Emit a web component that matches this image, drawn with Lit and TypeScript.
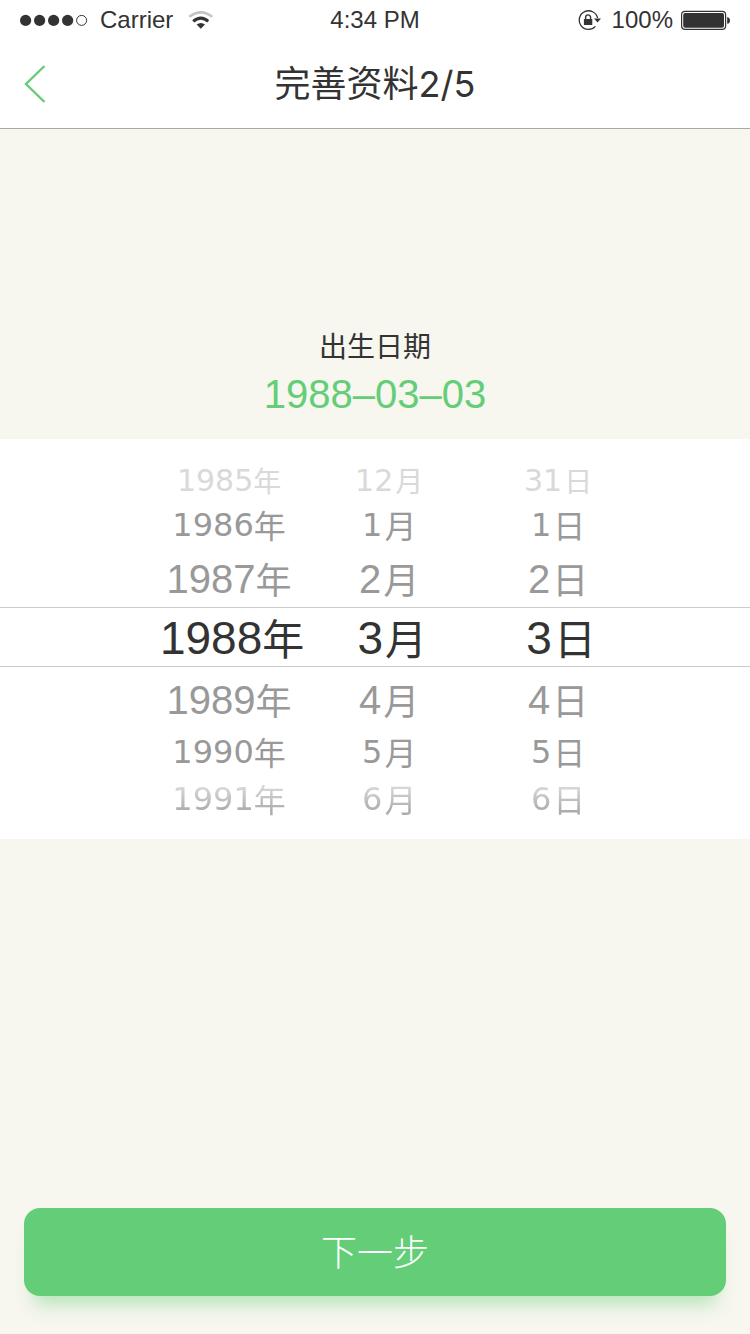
import { LitElement, html, css, svg } from "lit";
import { customElement, state } from "lit/decorators.js";
import { classMap } from "lit/directives/class-map.js";

interface Wheel {
  key: string;
  label: string;
  unit: string;
  items: number[];
}

const wheels: Wheel[] = [
  { key: "year", label: "年份", unit: "年", items: [1985, 1986, 1987, 1988, 1989, 1990, 1991] },
  { key: "month", label: "月份", unit: "月", items: [12, 1, 2, 3, 4, 5, 6] },
  { key: "day", label: "日期", unit: "日", items: [31, 1, 2, 3, 4, 5, 6] },
];

@customElement("status-bar")
class StatusBar extends LitElement {
  static styles = css`
    :host {
      display: grid;
      grid-template-columns: 1fr auto 1fr;
      align-items: center;
      height: 40px;
      padding: 0 20px;
      font: 24px/40px "Liberation Sans", sans-serif;
      color: #333;
    }
    .side {
      display: flex;
      align-items: center;
    }
    .end {
      justify-content: flex-end;
    }
    .dots {
      margin-right: 12px;
    }
    .wifi {
      margin-left: 14px;
    }
    .lock {
      margin-right: 10px;
    }
    .battery {
      margin-left: 8px;
    }
    svg {
      display: block;
    }
  `;

  render() {
    return html`
      <div class="side">
        <svg class="dots" width="68" height="12" viewBox="0 0 68 12" aria-hidden="true">
          ${[5.6, 19.6, 33.6, 47.6].map((x) => svg`<circle cx=${x} cy="6.4" r="5.6" fill="#333" />`)}
          <circle cx="61.6" cy="6.4" r="5" fill="none" stroke="#333" />
        </svg>
        <span>Carrier</span>
        <svg class="wifi" width="28" height="20" viewBox="0 0 28 20" fill="none" aria-hidden="true">
          <path d="M2.2 6.8Q14 -2 25.2 6.8" stroke="#c4c4c4" stroke-width="2.6" />
          <path d="M6.2 11.4Q14 4.8 21.2 11.4" stroke="#333" stroke-width="3" />
          <path d="M9.6 14.6Q14 11.4 18 14.6L13.8 18.8Z" fill="#333" />
        </svg>
      </div>
      <span>4:34 PM</span>
      <div class="side end">
        <svg class="lock" width="24" height="22" viewBox="0 0 24 22" fill="none" aria-hidden="true">
          <path d="M17.4 17.4A9.3 9.3 0 1 1 19.6 9" stroke="#333" stroke-width="1.3" />
          <path d="M16 9.4H23L19.5 13.4Z" fill="#333" />
          <rect x="5.9" y="10" width="8.4" height="6" rx="0.6" fill="#333" />
          <path d="M7.6 10.4V8.4a2.5 2.5 0 0 1 5 0V10.4" stroke="#333" stroke-width="1.4" />
        </svg>
        <span>100%</span>
        <svg class="battery" width="49" height="20" viewBox="0 0 49 20" aria-hidden="true">
          <rect x="0.6" y="1.4" width="44" height="18" rx="3.4" fill="none" stroke="#333" stroke-width="1.2" />
          <rect x="2.2" y="3" width="40.8" height="14.8" rx="2" fill="#333" />
          <path d="M46.2 7Q49 7.6 49 10.4T46.2 13.8Z" fill="#333" />
        </svg>
      </div>
    `;
  }
}

@customElement("date-wheels")
class DateWheels extends LitElement {
  static styles = css`
    :host {
      display: block;
      background: #fff;
    }
    .grid {
      display: grid;
      grid-template-columns: 154fr 150fr 170fr 168fr 108fr;
      grid-template-rows: 36px 52px 56px 60px 66px 38px 56px;
      padding: 24px 0 12px;
    }
    .band {
      grid-row: 4;
      grid-column: 1 / -1;
      border-top: 1px solid #ccc;
      border-bottom: 1px solid #ccc;
    }
    .wheel {
      display: contents;
    }
    .year {
      grid-column: 2;
    }
    .month {
      grid-column: 3;
    }
    .day {
      grid-column: 4;
    }
    .item {
      display: flex;
      align-items: center;
      justify-content: center;
      line-height: 1;
      color: #999;
      cursor: pointer;
    }
    .item input {
      appearance: none;
      display: block;
      flex: none;
      width: 0;
      height: 0;
      margin: 0;
      outline: none;
    }
    .num {
      font-family: "Liberation Sans", sans-serif;
      font-size: 40px;
    }
    .unit {
      padding-bottom: 2px;
      font-family: "Noto Sans CJK SC", sans-serif;
      font-size: 36px;
    }
    .month .unit,
    .day .unit {
      padding-left: 2px;
    }
    .r0 {
      grid-row: 1;
      color: #d9d9d9;
    }
    .r1 {
      grid-row: 2;
    }
    .r2 {
      grid-row: 3;
    }
    .r3 {
      grid-row: 4;
      padding: 2px 0 0 6px;
      color: #333;
    }
    .r4 {
      grid-row: 5;
    }
    .r5 {
      grid-row: 6;
    }
    .r6 {
      grid-row: 7;
      mask-image: linear-gradient(rgba(0, 0, 0, 0.4) 30%, rgba(0, 0, 0, 0.8) 70%);
    }
    .r0 .num,
    .r1 .num,
    .r5 .num,
    .r6 .num {
      font-family: "DejaVu Sans", sans-serif;
      font-size: 32px;
    }
    .r0 .num {
      font-size: 30px;
    }
    .r0 .unit {
      font-size: 28px;
    }
    .r1 .unit,
    .r5 .unit,
    .r6 .unit {
      font-size: 32px;
    }
    .r3 .num {
      font-size: 46px;
    }
    .r3 .unit {
      font-size: 42px;
    }
  `;

  render() {
    return html`
      <div class="grid">
        <div class="band"></div>
        ${wheels.map(
          (w) => html`
            <div class="wheel" role="radiogroup" aria-label=${w.label}>
              ${w.items.map(
                (n, i) => html`
                  <label class=${classMap({ item: true, [w.key]: true, ["r" + i]: true })}>
                    <input type="radio" name=${w.key} .value=${String(n)} ?checked=${i === 3} />
                    <span class="num">${n}</span><span class="unit">${w.unit}</span>
                  </label>
                `
              )}
            </div>
          `
        )}
      </div>
    `;
  }
}

@customElement("app-root")
class AppRoot extends LitElement {
  @state() date = "1988–03–03";

  static styles = css`
    :host {
      display: flex;
      flex-direction: column;
      min-height: 100vh;
      background: #f7f6ef;
      color: #333;
      font-family: "Noto Sans CJK SC", sans-serif;
    }
    .top {
      background: #fff;
      border-bottom: 1px solid #aaa9a4;
    }
    .nav {
      display: grid;
      grid-template-columns: 1fr auto 1fr;
      align-items: center;
      height: 88px;
      padding: 0 24px;
    }
    .back {
      display: block;
      justify-self: start;
      padding: 0;
      border: 0;
      background: none;
      cursor: pointer;
    }
    .back svg {
      display: block;
    }
    h1 {
      margin: 0;
      font: 400 36px/48px "Inter", "Noto Sans CJK SC", sans-serif;
    }
    .summary {
      padding: 196px 0 20px;
      text-align: center;
    }
    .caption {
      margin: 0;
      font-size: 28px;
      line-height: 40px;
    }
    .date {
      display: block;
      padding-top: 4px;
      font: 40px/50px "Liberation Sans", sans-serif;
      color: #63ce77;
    }
    .next {
      margin: auto 24px 38px;
      height: 88px;
      padding: 0 0 4px;
      border: 0;
      border-radius: 16px;
      background: #63ce77;
      box-shadow: 0 18px 18px -10px rgba(99, 206, 119, 0.45);
      color: #fff;
      font: 300 36px/48px "Noto Sans CJK SC", sans-serif;
      cursor: pointer;
    }
  `;

  render() {
    return html`
      <header class="top">
        <status-bar></status-bar>
        <nav class="nav">
          <button class="back" aria-label="返回">
            <svg width="22" height="38" viewBox="0 0 22 38" fill="none">
              <path d="M20.5 1L2 19L20.5 37" stroke="#63ce77" stroke-width="2.4" />
            </svg>
          </button>
          <h1>完善资料2/5</h1>
        </nav>
      </header>
      <section class="summary">
        <p class="caption">出生日期</p>
        <output class="date">${this.date}</output>
      </section>
      <date-wheels></date-wheels>
      <button class="next">下一步</button>
    `;
  }
}
